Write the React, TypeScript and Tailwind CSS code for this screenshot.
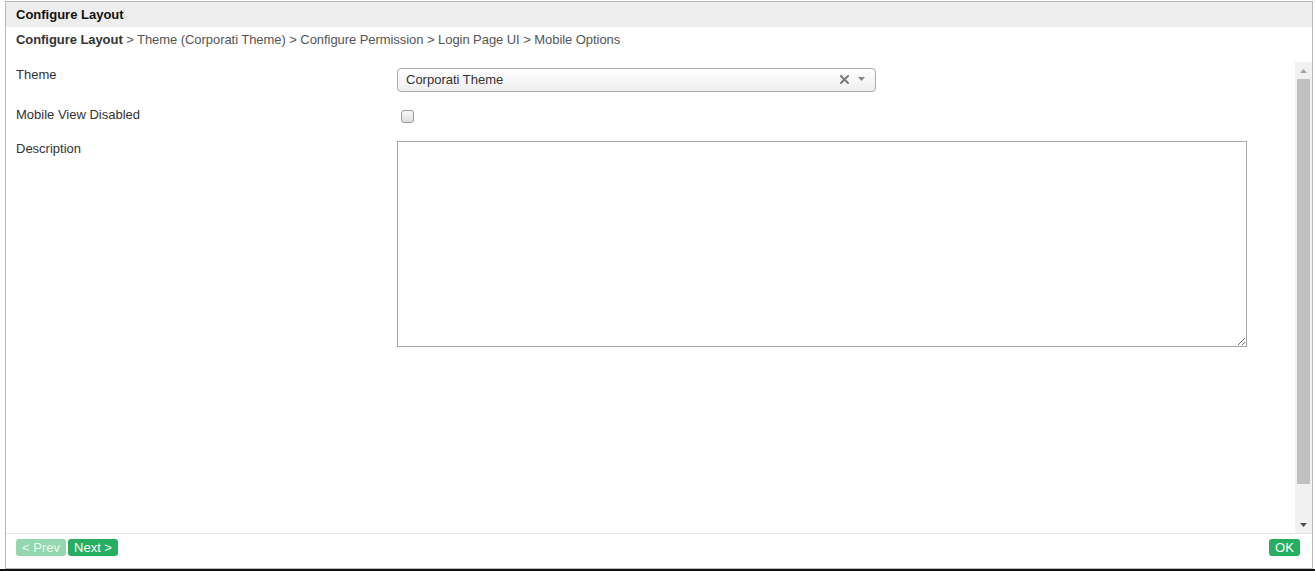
import { useState } from 'react';

const FONT = { fontFamily: '"Liberation Sans", Arial, sans-serif' };

function ClearIcon() {
  return (
    <svg width="9" height="9" viewBox="0 0 9 9" className="block">
      <path d="M1 1 L8 8 M8 1 L1 8" stroke="#7a7a7a" strokeWidth="2" strokeLinecap="square" />
    </svg>
  );
}

function Caret({ color = '#888', up = false }: { color?: string; up?: boolean }) {
  return (
    <svg width="7" height="4" viewBox="0 0 7 4" className="block">
      <path d={up ? 'M0 4 L3.5 0 L7 4 Z' : 'M0 0 L7 0 L3.5 4 Z'} fill={color} />
    </svg>
  );
}

export default function App() {
  const [mobileDisabled, setMobileDisabled] = useState(false);
  const [description, setDescription] = useState('');

  return (
    <div className="w-[1315px] h-[571px] bg-white overflow-hidden pt-[1px]" style={FONT}>
      <div className="ml-[5px] w-[1308px] h-[568px] border border-[#b9b9b9] flex flex-col">
        {/* title bar */}
        <div className="h-[25px] bg-[#eeeeee] pl-[10px] text-[13px] leading-[25px] font-bold text-[#111]">
          Configure Layout
        </div>

        {/* breadcrumb */}
        <div className="h-[26px] pl-[10px] text-[13px] leading-[26px] tracking-[-0.06px] text-[#555]">
          <span className="font-bold text-[#333]">Configure Layout</span> &gt; Theme (Corporati Theme) &gt; Configure
          Permission &gt; Login Page UI &gt; Mobile Options
        </div>

        {/* scrolling form area */}
        <div className="mt-[9px] h-[471px] flex">
          <div className="flex-1 pl-[10px] pt-[6px] text-[13px] text-[#333]">
            <div className="flex items-start">
              <div className="w-[381px] leading-[13px]">Theme</div>
              <div className="w-[479px] h-[24px] rounded-[4px] border border-[#aaaaaa] bg-gradient-to-b from-white to-[#eeeeee] flex items-center pl-[8px] pr-[10px] pb-[2px]">
                <span className="flex-1 leading-[15px] text-[#333]">Corporati Theme</span>
                <ClearIcon />
                <span className="ml-[9px]">
                  <Caret />
                </span>
              </div>
            </div>

            <div className="flex items-start mt-[16px]">
              <div className="w-[381px] leading-[13px]">Mobile View Disabled</div>
              <button
                type="button"
                onClick={() => setMobileDisabled(v => !v)}
                className="mt-[2px] ml-[4px] w-[13px] h-[13px] rounded-[3px] border border-[#9a9a9a] bg-gradient-to-b from-[#f8f8f8] to-[#dedede] flex items-center justify-center"
              >
                {mobileDisabled && (
                  <svg width="9" height="9" viewBox="0 0 9 9">
                    <path d="M1 4.5 L3.5 7 L8 1.5" stroke="#333" strokeWidth="1.5" fill="none" />
                  </svg>
                )}
              </button>
            </div>

            <div className="flex items-start mt-[18px]">
              <div className="w-[381px] leading-[13px] mt-[1px]">Description</div>
              <textarea
                value={description}
                onChange={e => setDescription(e.target.value)}
                className="w-[850px] h-[206px] border border-[#a9a9a9] bg-white outline-none resize p-[2px] text-[13px]"
              />
            </div>
          </div>

          {/* scrollbar */}
          <div className="w-[17px] bg-[#f1f1f1] flex flex-col items-center">
            <div className="h-[17px] flex items-center justify-center">
              <Caret color="#a3a3a3" up />
            </div>
            <div className="w-[13px] h-[405px] bg-[#c1c1c1]" />
            <div className="flex-1" />
            <div className="h-[17px] flex items-center justify-center">
              <Caret color="#505050" />
            </div>
          </div>
        </div>

        {/* footer */}
        <div className="flex-1 border-t border-[#e6e6e6] flex items-start justify-between pl-[10px] pr-[12px] pt-[5px]">
          <div className="flex gap-[2px]">
            <button
              type="button"
              disabled
              className="w-[50px] h-[17px] rounded-[3px] bg-[#93d7ae] text-[#eefaf2] text-[13px] leading-[17px] text-center"
            >
              &lt; Prev
            </button>
            <button
              type="button"
              className="w-[50px] h-[17px] rounded-[3px] bg-[#27ae60] text-white text-[13px] leading-[17px] text-center"
            >
              Next &gt;
            </button>
          </div>
          <button
            type="button"
            className="w-[31px] h-[17px] rounded-[3px] bg-[#27ae60] text-white text-[13px] leading-[17px] text-center"
          >
            OK
          </button>
        </div>
      </div>
      <div className="h-[2px] bg-[#111]" />
    </div>
  );
}
